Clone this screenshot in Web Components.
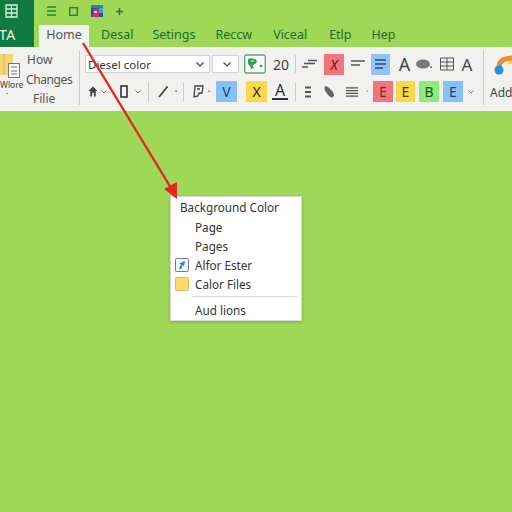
<!DOCTYPE html>
<html>
<head>
<meta charset="utf-8">
<style>
    html, body { margin: 0; height: 100%; }
    body { width: 512px; height: 512px; overflow: hidden; background: #9fd856; font-family: "Noto Sans", "Open Sans", sans-serif; }
</style>
</head>
<body>

<sheet-app>
    <app-header>
        <quick-bar></quick-bar>
        <tab-item active>Home</tab-item>
        <tab-item at="12">Desal</tab-item>
        <tab-item at="19">Setings</tab-item>
        <tab-item at="20">Reccw</tab-item>
        <tab-item at="21">Viceal</tab-item>
        <tab-item at="22">Etlp</tab-item>
        <tab-item at="20">Hep</tab-item>
    </app-header>
    <ribbon-bar>
        <tool-row slot="row1">
            <font-select w="125" label="Diesel color"></font-select>
            <font-select w="27" at="2"></font-select>
            <rb-tool w="22" at="5"><svg width="22" height="20" viewBox="0 0 22 20"><rect x=".7" y="1" width="20.600" height="18" rx="2" fill="#fff" stroke="#58a868" stroke-width="1.400"/><path d="M4 5c2-1 5-1 6 0l2 .5c1 1 1 3 0 4l-2 .5-1 2 1 2-3 1-1-3-2-2z" fill="#35a04e"/><path d="M7 7h3" stroke="#fff"/><circle cx="17" cy="12" r="1.300" fill="#2b9a48"/></svg></rb-tool>
            <rb-tool w="16" at="7" text="20"></rb-tool>
            <rb-tool w="1" at="6" sep></rb-tool>
            <rb-tool w="15" at="6"><svg width="15" height="12" viewBox="0 0 15 12"><path d="M6 2.500h9M2 5.500h11M0 9h6" stroke="#555" stroke-width="1.400" fill="none"/></svg></rb-tool>
            <rb-tool w="20" at="7" bg="#f4737c" text="X" color="#5a1a1e" italic></rb-tool>
            <rb-tool w="15" at="6"><svg width="15" height="12" viewBox="0 0 15 12"><path d="M1 3h14M1 7h9" stroke="#555" stroke-width="1.600" fill="none"/></svg></rb-tool>
            <rb-tool w="19" at="6" bg="#8fc4f4"><svg width="13" height="12" viewBox="0 0 13 12"><path d="M1 2h11M1 6h11M1 10h8" stroke="#28457e" stroke-width="1.600" fill="none"/></svg></rb-tool>
            <rb-tool w="15" at="7" text="A" size="18" color="#444"></rb-tool>
            <rb-tool w="16" at="4"><svg width="16" height="12" viewBox="0 0 16 12"><ellipse cx="7" cy="6" rx="7" ry="4.500" fill="#777"/><circle cx="15" cy="9" r="1" fill="#666"/></svg></rb-tool>
            <rb-tool w="14" at="8"><svg width="14" height="14" viewBox="0 0 14 14"><path d="M.5 1h13v12H.500zM.5 5h13M7 1v12M.5 9h13" stroke="#555" fill="none"/></svg></rb-tool>
            <rb-tool w="12" at="7" text="A" size="17" color="#444"></rb-tool>
        </tool-row>
        <tool-row slot="row2">
            <rb-tool w="10" at="3"><svg width="11" height="13" viewBox="0 0 11 13"><path d="M5.500 1 .5 6h2v6h2V8h2v4h2V6h2z" fill="#444"/></svg></rb-tool>
            <rb-tool w="6" at="3" chev></rb-tool>
            <rb-tool w="8" at="13"><svg width="8" height="13" viewBox="0 0 8 13"><rect x="1" y="1" width="6" height="11" fill="none" stroke="#333" stroke-width="1.600"/></svg></rb-tool>
            <rb-tool w="6" at="7" chev></rb-tool>
            <rb-tool w="1" at="7" sep></rb-tool>
            <rb-tool w="10" at="9"><svg width="10" height="12" viewBox="0 0 10 12"><path d="M9.500.5 1 11" stroke="#444" stroke-width="1.800" fill="none"/></svg></rb-tool>
            <rb-tool w="4" at="6" text="·" size="12" color="#555"></rb-tool>
            <rb-tool w="1" at="5" sep></rb-tool>
            <rb-tool w="12" at="8"><svg width="12" height="13" viewBox="0 0 12 13"><path d="M3 1h8l-1 7H7l-1 3-4 1zM5 4h3" stroke="#444" stroke-width="1.300" fill="none"/></svg></rb-tool>
            <rb-tool w="4" at="3" text="·" size="12" color="#777"></rb-tool>
            <rb-tool w="21" at="5" bg="#86c1f5" text="V" color="#24367a"></rb-tool>
            <rb-tool w="21" at="9" bg="#fcd848" text="X" color="#222"></rb-tool>
            <rb-tool w="16" at="5"><span style="font-size:16px;line-height:15px;color:#333;border-bottom:2px solid #333;display:block;text-align:center;width:16px">A</span></rb-tool>
            <rb-tool w="1" at="7" sep></rb-tool>
            <rb-tool w="8" at="8"><svg width="6" height="12" viewBox="0 0 6 12"><path d="M0 1.500h6M0 6h6M0 10.500h6" stroke="#555" stroke-width="1.800" fill="none"/></svg></rb-tool>
            <rb-tool w="12" at="11"><svg width="12" height="13" viewBox="0 0 12 13"><path d="M2 1c3 0 9 6 9 9s-3 3-5 1-6-7-4-10z" fill="#666"/></svg></rb-tool>
            <rb-tool w="12" at="11"><svg width="13" height="12" viewBox="0 0 13 12"><path d="M0 1.500h13M0 4.500h13M0 7.500h13M0 10.500h13" stroke="#555" stroke-width="1.300" fill="none"/></svg></rb-tool>
            <rb-tool w="4" at="7" text="·" size="12" color="#999"></rb-tool>
            <rb-tool w="20" at="4" bg="#f4737c" text="E" color="#6d3a18"></rb-tool>
            <rb-tool w="19" at="3" bg="#fcd848" text="E" color="#4a3d10"></rb-tool>
            <rb-tool w="20" at="4" bg="#8eec78" text="B" color="#1d4d2a"></rb-tool>
            <rb-tool w="20" at="4" bg="#86c1f5" text="E" color="#24406a"></rb-tool>
            <rb-tool w="6" at="5" chev></rb-tool>
        </tool-row>
    </ribbon-bar>
    <context-menu>
        <menu-item head>Background Color</menu-item>
        <menu-item>Page</menu-item>
        <menu-item>Pages</menu-item>
        <menu-item>
            <svg slot="icon" width="14" height="14" viewBox="0 0 14 14"><rect x=".5" y=".5" width="13" height="13" rx="1" fill="#f4f7fb" stroke="#6a7d92"/><path d="M4 11 6 6l-2-.5L10 3 9 8 7.500 7 6 11z" fill="#1f86c9"/></svg>
            Alfor Ester
        </menu-item>
        <menu-item>
            <svg slot="icon" width="14" height="14" viewBox="0 0 14 14"><rect x=".5" y=".5" width="13" height="13" rx="1" fill="#fbd96b" stroke="#d6b65a"/></svg>
            Calor Files
        </menu-item>
        <menu-sep></menu-sep>
        <menu-item>Aud lions</menu-item>
    </context-menu>
</sheet-app>

<script>
const sans = `"Noto Sans", "Open Sans", sans-serif`;

class SheetApp extends HTMLElement {
    constructor() {
        super();
        this.attachShadow({mode: 'open'}).innerHTML = `
            <style>
                :host { display: block; position: relative; width: 512px; height: 512px; font-family: ${sans}; }
                svg { position: absolute; left: 0; top: 0; pointer-events: none; }
            </style>
            <slot></slot>
            <svg width="512" height="512" viewBox="0 0 512 512">
                <path d="M83 43 171 188" stroke="#e5261f" stroke-width="2.400" fill="none"/>
                <path d="M177 199 164 189 177 182z" fill="#e5261f"/>
            </svg>
        `;
    }
}

class AppHeader extends HTMLElement {
    constructor() {
        super();
        this.attachShadow({mode: 'open'}).innerHTML = `
            <style>
                :host { display: flex; height: 47px; }
                .brand { width: 34px; background: #117a3e; color: #e9f5ec; overflow: hidden; display: flex; flex-direction: column; }
                .brand svg { margin: 4px 0 0 5px; flex: none; }
                .brand span { font-size: 14px; line-height: 18px; margin: 8px 0 0 -1px; letter-spacing: .5px; }
                .rest { flex: 1; display: flex; flex-direction: column; }
                .tabs { display: flex; height: 22px; margin-top: 3px; padding-left: 5px; }
            </style>
            <div class="brand">
                <svg width="13" height="14" viewBox="0 0 13 14"><path d="M1 1h11v12H1zM6.500 1v12M1 5h11M1 9h11" fill="none" stroke="#dff0e4" stroke-width="1.300"/></svg>
                <span>TA</span>
            </div>
            <div class="rest">
                <slot name="quick"></slot>
                <div class="tabs"><slot></slot></div>
            </div>
        `;
    }
    connectedCallback() {
        const quick = this.querySelector('quick-bar');
        if (quick) quick.slot = 'quick';
    }
}

class QuickBar extends HTMLElement {
    constructor() {
        super();
        this.attachShadow({mode: 'open'}).innerHTML = `
            <style>
                :host { display: flex; align-items: center; height: 22px; padding-left: 13px; box-sizing: border-box; }
                svg { display: block; }
            </style>
            <svg width="9" height="10" viewBox="0 0 9 10"><path d="M0 1h9M0 5h9M0 9h9" stroke="#2f7d3a" stroke-width="1.500"/></svg>
            <svg style="margin-left:13px" width="9" height="9" viewBox="0 0 9 9"><rect x=".7" y=".7" width="7.600" height="7.600" fill="none" stroke="#2f7d3a" stroke-width="1.400"/></svg>
            <svg style="margin-left:13px" width="12" height="12" viewBox="0 0 12 12"><rect width="12" height="12" fill="#2a4fa8"/><rect y="0" width="12" height="3" fill="#1f8f88"/><rect x="2" y="4" width="6" height="8" fill="#e0247c"/><rect x="8" y="3" width="4" height="5" fill="#31a7e0"/><rect x="3" y="6" width="3" height="2" fill="#f7b6cf"/></svg>
            <svg style="margin-left:13px" width="7" height="7" viewBox="0 0 7 7"><path d="M3.500 0v7M0 3.500h7" stroke="#3c6b3a" stroke-width="1.500"/></svg>
        `;
    }
}

class TabItem extends HTMLElement {
    constructor() {
        super();
        this.attachShadow({mode: 'open'}).innerHTML = `
            <style>
                :host { display: block; font-size: 12.500px; line-height: 20px; color: #1d6b2d; white-space: nowrap; }
                :host([active]) { width: 50px; text-align: center; background: #f1f1ef; color: #4d5560; }
            </style>
            <slot></slot>
        `;
    }
    connectedCallback() {
        this.style.marginLeft = (this.getAttribute('at') || 0) + 'px';
    }
}

class RibbonBar extends HTMLElement {
    constructor() {
        super();
        this.attachShadow({mode: 'open'}).innerHTML = `
            <style>
                :host { display: flex; height: 64px; background: #f1f1ef; color: #444; overflow: hidden; }
                .file { width: 79px; flex: none; display: flex; }
                .big { width: 22px; flex: none; display: flex; flex-direction: column; align-items: flex-start; }
                .big svg { margin-top: 6px; flex: none; }
                .big span { font-size: 8.500px; line-height: 10px; margin-top: 1px; }
                .big i { font-style: normal; font-size: 9px; line-height: 8px; margin-left: 6px; }
                .words { flex: 1; font-size: 12px; line-height: 19.500px; padding-top: 3px; color: #555; }
                .words span { display: block; white-space: nowrap; }
                .sep { width: 1px; flex: none; margin: 4px 0 6px; background: #c9c9c7; }
                .tools { width: 403px; flex: none; padding: 7px 0 0 5px; box-sizing: border-box; display: flex; flex-direction: column; gap: 7px; }
                .add { padding-left: 6px; }
                .add svg { display: block; margin: 5px 0 0 4px; }
                .add span { display: block; font-size: 12px; line-height: 18px; margin-top: 8px; color: #444; }
            </style>
            <div class="file">
                <div class="big">
                    <svg width="20" height="26" viewBox="0 0 20 26">
                        <rect x="-2" y="1" width="15" height="21" rx="1" fill="#f5d874"/>
                        <path d="M4 1v20" stroke="#d6b04a"/>
                        <rect x="8.500" y="10.500" width="11" height="14" fill="#f8f8f8" stroke="#777"/>
                        <path d="M11 14h6M11 18h6M11 21h6" stroke="#777"/>
                    </svg>
                    <span>Wlore</span>
                    <i>·</i>
                </div>
                <div class="words">
                    <span style="margin-left:5px">How</span>
                    <span style="margin-left:4px;letter-spacing:-.4px">Changes</span>
                    <span style="margin-left:11px">Filie</span>
                </div>
            </div>
            <div class="sep"></div>
            <div class="tools"><slot name="row1"></slot><slot name="row2"></slot></div>
            <div class="sep"></div>
            <div class="add">
                <svg width="24" height="24" viewBox="0 0 24 24">
                    <path d="M5 16C5 8 10 6 22 6" fill="none" stroke="#f08a2c" stroke-width="5"/>
                    <path d="M14 11c3-1 5-1 8-1" fill="none" stroke="#f6d24a" stroke-width="3"/>
                    <circle cx="5" cy="18" r="4.500" fill="#1f8fe0"/>
                </svg>
                <span>Add</span>
            </div>
        `;
    }
}

class ToolRow extends HTMLElement {
    constructor() {
        super();
        this.attachShadow({mode: 'open'}).innerHTML = `
            <style>
                :host { display: flex; align-items: center; height: 20.500px; }
            </style>
            <slot></slot>
        `;
    }
}

class FontSelect extends HTMLElement {
    constructor() {
        super();
        this.attachShadow({mode: 'open'}).innerHTML = `
            <style>
                :host { display: flex; align-items: center; height: 18px; box-sizing: border-box; background: #fff; border: 1px solid #d2d2d0; font-size: 11.500px; color: #333; flex: none; }
                span { flex: 1; padding-left: 2px; white-space: nowrap; }
                svg { margin-right: 5px; flex: none; }
            </style>
            <span></span>
            <svg width="8" height="5" viewBox="0 0 8 5"><path d="M.5.500 4 4 7.500.500" fill="none" stroke="#444" stroke-width="1.200"/></svg>
        `;
    }
    connectedCallback() {
        this.style.width = this.getAttribute('w') + 'px';
        this.style.marginLeft = (this.getAttribute('at') || 0) + 'px';
        this.shadowRoot.querySelector('span').textContent = this.getAttribute('label') || '';
        if (!this.getAttribute('label')) {
            this.shadowRoot.querySelector('span').style.flex = '0 0 auto';
            this.style.justifyContent = 'center';
            this.shadowRoot.querySelector('svg').style.marginRight = '0';
        }
    }
}

class RbTool extends HTMLElement {
    constructor() {
        super();
        this.attachShadow({mode: 'open'}).innerHTML = `
            <style>
                :host { display: flex; align-items: center; justify-content: center; flex: none; height: 20px; font-size: 14px; color: #444; }
                :host([sep]) { background: #c9c9c7; height: 18px; }
                svg { display: block; flex: none; }
            </style>
            <slot></slot>
        `;
    }
    connectedCallback() {
        const s = this.style;
        s.width = this.getAttribute('w') + 'px';
        s.marginLeft = (this.getAttribute('at') || 0) + 'px';
        if (this.hasAttribute('bg')) {
            s.background = this.getAttribute('bg');
            s.height = '21px';
        }
        if (this.hasAttribute('color')) s.color = this.getAttribute('color');
        if (this.hasAttribute('size')) s.fontSize = this.getAttribute('size') + 'px';
        if (this.hasAttribute('italic')) s.fontStyle = 'italic';
        if (this.hasAttribute('text')) this.textContent = this.getAttribute('text');
        if (this.hasAttribute('chev')) {
            this.shadowRoot.innerHTML += `<svg width="6" height="4" viewBox="0 0 6 4"><path d="M.5.500 3 3 5.500.500" fill="none" stroke="#777"/></svg>`;
        }
    }
}

class ContextMenu extends HTMLElement {
    constructor() {
        super();
        this.attachShadow({mode: 'open'}).innerHTML = `
            <style>
                :host { display: block; position: absolute; left: 170px; top: 196px; width: 132px; height: 125px; box-sizing: border-box; background: #fff; border: 1px solid #d8dcd4; box-shadow: 0 1px 3px rgba(40, 70, 20, .3); font-size: 11.700px; color: #333; }
            </style>
            <slot></slot>
        `;
    }
}

class MenuItem extends HTMLElement {
    constructor() {
        super();
        this.attachShadow({mode: 'open'}).innerHTML = `
            <style>
                :host { display: flex; align-items: center; height: 19px; padding-left: 24px; position: relative; white-space: nowrap; }
                :host([head]) { padding-left: 9px; height: 20px; }
                ::slotted(svg) { position: absolute; left: 4px; top: 3px; }
            </style>
            <slot name="icon"></slot><slot></slot>
        `;
    }
}

class MenuSep extends HTMLElement {
    constructor() {
        super();
        this.attachShadow({mode: 'open'}).innerHTML = `
            <style>
                :host { display: block; height: 1px; margin: 3px 4px 3px 21px; background: #d9d9d9; }
            </style>
        `;
    }
}

customElements.define('sheet-app', SheetApp);
customElements.define('app-header', AppHeader);
customElements.define('quick-bar', QuickBar);
customElements.define('tab-item', TabItem);
customElements.define('ribbon-bar', RibbonBar);
customElements.define('tool-row', ToolRow);
customElements.define('font-select', FontSelect);
customElements.define('rb-tool', RbTool);
customElements.define('context-menu', ContextMenu);
customElements.define('menu-item', MenuItem);
customElements.define('menu-sep', MenuSep);
</script>
</body>
</html>
